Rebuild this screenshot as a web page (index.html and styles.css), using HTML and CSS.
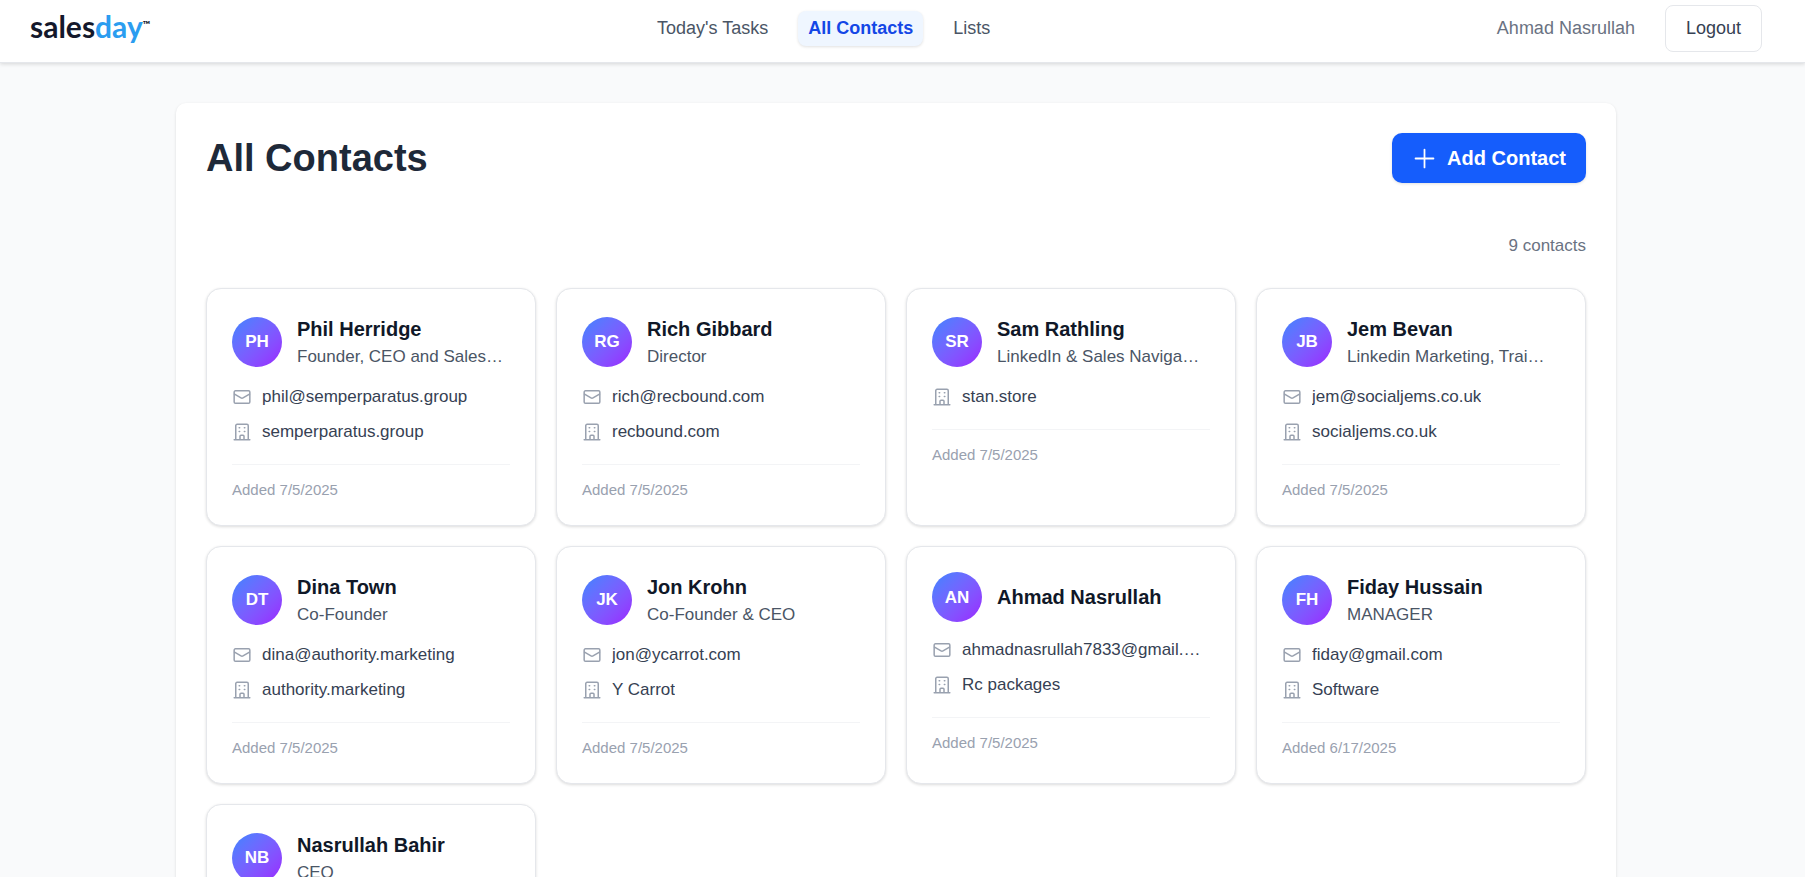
FILE: index.html
```html
<!DOCTYPE html>
<html lang="en">
<head>
    <meta charset="UTF-8">
    <meta name="viewport" content="width=device-width, initial-scale=1.0">
    <title>All Contacts - Salesday</title>
    <link rel="stylesheet" href="styles.css">
</head>
<body>

<!-- Shared icons -->
<svg class="sprite" aria-hidden="true">
    <symbol id="icon-mail" viewBox="0 0 24 24">
        <rect x="2.6" y="4.6" width="18.8" height="14.8" rx="1.5"/>
        <path d="M3 8.6l7.8 4.4c.8.5 1.6.5 2.4 0L21 8.6"/>
    </symbol>
    <symbol id="icon-building" viewBox="0 0 24 24">
        <path d="M2.6 21.2h18.8M4.5 21.2V4.4c0-1 .7-1.6 1.6-1.6h11.8c.9 0 1.6.6 1.6 1.6v16.8M8.6 7h.6M14.8 7h.6M8.6 11.4h.6M14.8 11.4h.6M9.6 21.2v-4c0-.7.4-1.2 1.2-1.2h2.4c.8 0 1.2.5 1.2 1.2v4"/>
    </symbol>
</svg>

<header class="topbar">
    <a href="#" class="logo">sales<span class="logo-day">day</span><sup class="logo-tm">™</sup></a>
    <nav class="nav">
        <a href="#" class="nav-link">Today's Tasks</a>
        <a href="#" class="nav-link active">All Contacts</a>
        <a href="#" class="nav-link">Lists</a>
    </nav>
    <div class="user">
        <span class="user-name">Ahmad Nasrullah</span>
        <button type="button" class="logout">Logout</button>
    </div>
</header>

<div class="page">
<main class="panel">
    <div class="panel-header">
        <h1>All Contacts</h1>
        <button type="button" class="add-contact">
            <svg class="icon-plus" viewBox="0 0 24 24"><path d="M12 3.4v17.2M3.4 12h17.2"/></svg>
            Add Contact
        </button>
    </div>
    <p class="count">9 contacts</p>

    <div class="grid">
        <article class="card">
            <div class="person">
                <div class="avatar">PH</div>
                <div class="info">
                    <h2>Phil Herridge</h2>
                    <p class="role">Founder, CEO and Sales…</p>
                </div>
            </div>
            <ul class="details">
                <li><svg class="icon"><use href="#icon-mail"/></svg><span>phil@semperparatus.group</span></li>
                <li><svg class="icon"><use href="#icon-building"/></svg><span>semperparatus.group</span></li>
            </ul>
            <p class="added">Added 7/5/2025</p>
        </article>

        <article class="card">
            <div class="person">
                <div class="avatar">RG</div>
                <div class="info">
                    <h2>Rich Gibbard</h2>
                    <p class="role">Director</p>
                </div>
            </div>
            <ul class="details">
                <li><svg class="icon"><use href="#icon-mail"/></svg><span>rich@recbound.com</span></li>
                <li><svg class="icon"><use href="#icon-building"/></svg><span>recbound.com</span></li>
            </ul>
            <p class="added">Added 7/5/2025</p>
        </article>

        <article class="card">
            <div class="person">
                <div class="avatar">SR</div>
                <div class="info">
                    <h2>Sam Rathling</h2>
                    <p class="role">LinkedIn &amp; Sales Naviga…</p>
                </div>
            </div>
            <ul class="details">
                <li><svg class="icon"><use href="#icon-building"/></svg><span>stan.store</span></li>
            </ul>
            <p class="added">Added 7/5/2025</p>
        </article>

        <article class="card">
            <div class="person">
                <div class="avatar">JB</div>
                <div class="info">
                    <h2>Jem Bevan</h2>
                    <p class="role">Linkedin Marketing, Trai…</p>
                </div>
            </div>
            <ul class="details">
                <li><svg class="icon"><use href="#icon-mail"/></svg><span>jem@socialjems.co.uk</span></li>
                <li><svg class="icon"><use href="#icon-building"/></svg><span>socialjems.co.uk</span></li>
            </ul>
            <p class="added">Added 7/5/2025</p>
        </article>

        <article class="card">
            <div class="person">
                <div class="avatar">DT</div>
                <div class="info">
                    <h2>Dina Town</h2>
                    <p class="role">Co-Founder</p>
                </div>
            </div>
            <ul class="details">
                <li><svg class="icon"><use href="#icon-mail"/></svg><span>dina@authority.marketing</span></li>
                <li><svg class="icon"><use href="#icon-building"/></svg><span>authority.marketing</span></li>
            </ul>
            <p class="added">Added 7/5/2025</p>
        </article>

        <article class="card">
            <div class="person">
                <div class="avatar">JK</div>
                <div class="info">
                    <h2>Jon Krohn</h2>
                    <p class="role">Co-Founder &amp; CEO</p>
                </div>
            </div>
            <ul class="details">
                <li><svg class="icon"><use href="#icon-mail"/></svg><span>jon@ycarrot.com</span></li>
                <li><svg class="icon"><use href="#icon-building"/></svg><span>Y Carrot</span></li>
            </ul>
            <p class="added">Added 7/5/2025</p>
        </article>

        <article class="card">
            <div class="person">
                <div class="avatar">AN</div>
                <div class="info">
                    <h2>Ahmad Nasrullah</h2>
                </div>
            </div>
            <ul class="details">
                <li><svg class="icon"><use href="#icon-mail"/></svg><span>ahmadnasrullah7833@gmail.…</span></li>
                <li><svg class="icon"><use href="#icon-building"/></svg><span>Rc packages</span></li>
            </ul>
            <p class="added">Added 7/5/2025</p>
        </article>

        <article class="card">
            <div class="person">
                <div class="avatar">FH</div>
                <div class="info">
                    <h2>Fiday Hussain</h2>
                    <p class="role">MANAGER</p>
                </div>
            </div>
            <ul class="details">
                <li><svg class="icon"><use href="#icon-mail"/></svg><span>fiday@gmail.com</span></li>
                <li><svg class="icon"><use href="#icon-building"/></svg><span>Software</span></li>
            </ul>
            <p class="added">Added 6/17/2025</p>
        </article>

        <article class="card">
            <div class="person">
                <div class="avatar">NB</div>
                <div class="info">
                    <h2>Nasrullah Bahir</h2>
                    <p class="role">CEO</p>
                </div>
            </div>
        </article>
    </div>
</main>
</div>

</body>
</html>
```
FILE: styles.css
```css
* {
    box-sizing: border-box;
}
body {
    font-family: "Liberation Sans", Arial, sans-serif;
    font-size: 17px;
    line-height: 25px;
    background-color: #f9fafb;
    color: #364153;
    margin: 0;
}
h1, h2, p, ul {
    margin: 0;
    padding: 0;
}
a {
    text-decoration: none;
}
button {
    font-family: inherit;
    line-height: inherit;
    cursor: pointer;
}
.sprite {
    display: none;
}

/* Top bar */
.topbar {
    display: flex;
    justify-content: space-between;
    align-items: center;
    padding: 5px 43px 10px 30px;
    font-size: 18px;
    background-color: white;
    border-bottom: 1px solid #e5e7eb;
    box-shadow: 0 1px 4px rgba(0, 0, 0, 0.15);
}
.logo {
    padding-bottom: 5px;
    font-family: Lato, sans-serif;
    font-size: 30px;
    font-weight: bold;
    line-height: 35px;
    color: #14182b;
}
.logo-day {
    color: #2b9df0;
}
.logo-tm {
    font-size: 10px;
    line-height: 10px;
    vertical-align: 10px;
}
.nav {
    display: flex;
    gap: 20px;
}
.nav-link {
    padding: 5px 10px;
    border-radius: 8px;
    color: #4a5565;
}
.nav-link.active {
    background-color: #eff6ff;
    color: #1447e6;
    font-weight: bold;
    box-shadow: 0 1px 3px rgba(0, 0, 0, 0.12);
}
.user {
    display: flex;
    align-items: center;
    gap: 30px;
}
.user-name {
    color: #6a7282;
}
.logout {
    padding: 10px 20px;
    font-size: 18px;
    color: #364153;
    background-color: white;
    border: 1px solid #e5e7eb;
    border-radius: 8px;
}

/* Contacts panel */
.page {
    padding: 40px 43px 40px 30px;
}
.panel {
    max-width: 1440px;
    margin: 0 auto;
    padding: 30px;
    background-color: white;
    border-radius: 10px;
    box-shadow: 0 1px 3px rgba(0, 0, 0, 0.12);
}
.panel-header {
    display: flex;
    justify-content: space-between;
    align-items: center;
    margin-bottom: 50px;
}
h1 {
    font-size: 38px;
    line-height: 50px;
    color: #1e2939;
}
.add-contact {
    display: flex;
    align-items: center;
    gap: 10px;
    padding: 10px 20px;
    font-size: 20px;
    line-height: 30px;
    font-weight: bold;
    color: white;
    background-color: #155dfc;
    border: none;
    border-radius: 10px;
    box-shadow: 0 1px 3px rgba(0, 0, 0, 0.12);
}
.icon-plus {
    width: 25px;
    height: 25px;
    fill: none;
    stroke: currentColor;
    stroke-width: 1.7;
    stroke-linecap: round;
}
.count {
    margin-bottom: 30px;
    color: #6a7282;
    text-align: right;
}

/* Contact cards */
.grid {
    display: grid;
    grid-template-columns: repeat(4, minmax(0, 1fr));
    gap: 20px;
}
.card {
    padding: 25px;
    border: 1px solid #e5e7eb;
    border-radius: 15px;
    background-color: white;
    box-shadow: 0 1px 3px rgba(0, 0, 0, 0.14);
}
.person {
    display: flex;
    align-items: center;
    gap: 15px;
    margin-bottom: 15px;
}
.avatar {
    display: flex;
    align-items: center;
    justify-content: center;
    flex-shrink: 0;
    width: 50px;
    height: 50px;
    border-radius: 50%;
    background: linear-gradient(135deg in oklab, #3485ff, #9a1cff);
    color: white;
    font-weight: bold;
}
.info {
    min-width: 0;
}
.info h2 {
    font-size: 20px;
    line-height: 30px;
    color: #101828;
}
.role {
    color: #4a5565;
}
.info h2, .role, .details span {
    overflow: hidden;
    text-overflow: ellipsis;
    white-space: nowrap;
}
.details {
    display: grid;
    gap: 10px;
    list-style: none;
}
.details li {
    display: flex;
    align-items: center;
    gap: 10px;
    min-width: 0;
}
.icon {
    flex-shrink: 0;
    width: 20px;
    height: 20px;
    fill: none;
    stroke: #99a1af;
    stroke-width: 1.8;
    stroke-linecap: round;
    stroke-linejoin: round;
}
.added {
    margin-top: 20px;
    padding-top: 15px;
    border-top: 1px solid #f3f4f6;
    font-size: 15px;
    line-height: 20px;
    color: #99a1af;
}
```
